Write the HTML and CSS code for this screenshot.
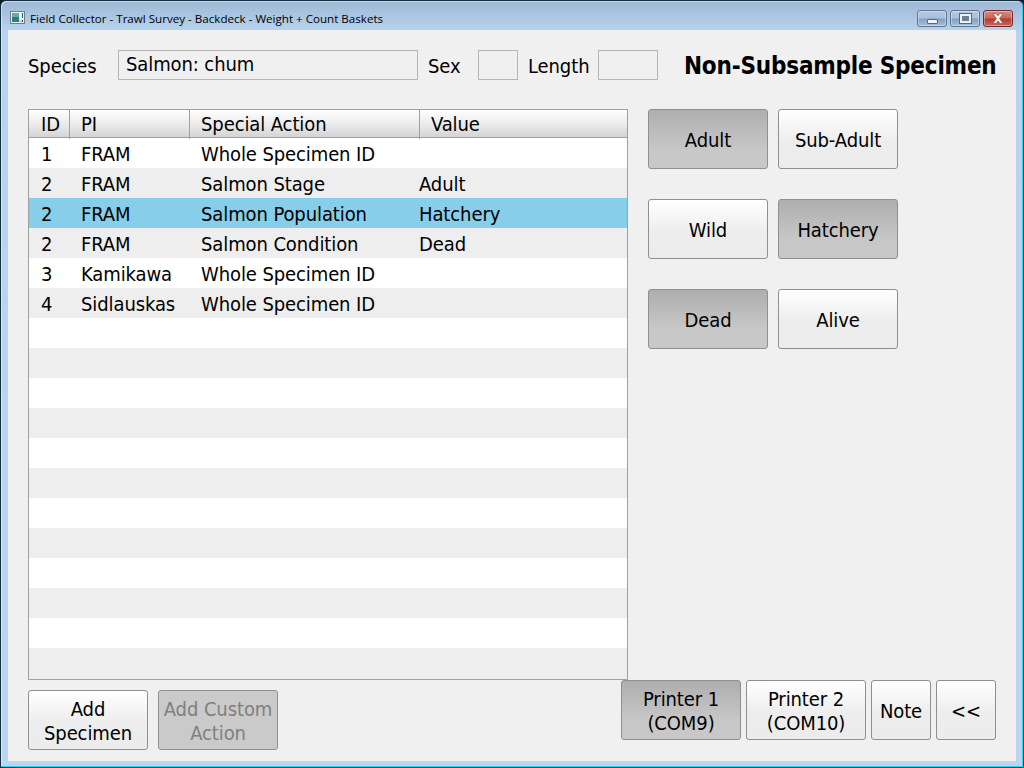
FILE: index.html
```html
<!DOCTYPE html>
<html lang="en">
<head>
<meta charset="utf-8">
<title>Field Collector</title>
<link rel="stylesheet" href="styles.css">
</head>
<body>
<div class="window">
  <div class="titlebar">
    <svg class="app-icon" width="16" height="16" viewBox="0 0 16 16">
      <rect x="0.5" y="1.5" width="14" height="12" fill="#e8eef2" stroke="#6d7f8c"/>
      <rect x="2" y="3" width="7" height="9" fill="#2f7f78"/>
      <rect x="2" y="3" width="7" height="4" fill="#6fa7a6"/>
      <rect x="9" y="10" width="3" height="2" fill="#c5ced4"/>
      <rect x="12" y="3" width="1" height="5" fill="#2f5a70"/>
      <rect x="12" y="10" width="1" height="2" fill="#2f5a70"/>
    </svg>
    <span class="title-text">Field Collector - Trawl Survey - Backdeck - Weight + Count Baskets</span>
    <div class="controls">
      <div class="ctl ctl-min"><span class="glyph-min"></span></div>
      <div class="ctl ctl-max"><span class="glyph-max"></span></div>
      <div class="ctl ctl-close">
        <svg width="14" height="11" viewBox="0 0 14 11"><path d="M2 0.5h3l2 2.3 2-2.3h3l-3.4 5 3.4 5h-3l-2-2.5-2 2.5h-3l3.4-5z" fill="#f4f1f0" stroke="#8a4a48" stroke-width="0.6"/></svg>
      </div>
    </div>
  </div>
  <div class="client">
    <div class="top-row">
      <span class="label label-species">Species</span>
      <div class="field field-species">Salmon: chum</div>
      <span class="label label-sex">Sex</span>
      <div class="field field-sex"></div>
      <span class="label label-length">Length</span>
      <div class="field field-length"></div>
      <h1 class="heading">Non-Subsample Specimen</h1>
    </div>
    <div class="middle">
      <div class="table">
        <div class="thead">
          <div class="th th-id">ID</div>
          <div class="th th-pi">PI</div>
          <div class="th th-action">Special Action</div>
          <div class="th th-value">Value</div>
        </div>
        <div class="tbody">
          <div class="row"><span>1</span><span>FRAM</span><span>Whole Specimen ID</span><span></span></div>
          <div class="row alt"><span>2</span><span>FRAM</span><span>Salmon Stage</span><span>Adult</span></div>
          <div class="row selected"><span>2</span><span>FRAM</span><span>Salmon Population</span><span>Hatchery</span></div>
          <div class="row alt"><span>2</span><span>FRAM</span><span>Salmon Condition</span><span>Dead</span></div>
          <div class="row"><span>3</span><span>Kamikawa</span><span>Whole Specimen ID</span><span></span></div>
          <div class="row alt"><span>4</span><span>Sidlauskas</span><span>Whole Specimen ID</span><span></span></div>
          <div class="row"></div><div class="row alt"></div>
          <div class="row"></div><div class="row alt"></div>
          <div class="row"></div><div class="row alt"></div>
          <div class="row"></div><div class="row alt"></div>
          <div class="row"></div><div class="row alt"></div>
          <div class="row"></div><div class="row alt"></div>
        </div>
      </div>
      <div class="toggles">
        <div class="btn on">Adult</div>
        <div class="btn">Sub-Adult</div>
        <div class="btn">Wild</div>
        <div class="btn on">Hatchery</div>
        <div class="btn on">Dead</div>
        <div class="btn">Alive</div>
      </div>
    </div>
    <div class="bottom">
      <div class="bottom-left">
        <div class="btn">Add<br>Specimen</div>
        <div class="btn disabled">Add Custom<br>Action</div>
      </div>
      <div class="bottom-right">
        <div class="btn on">Printer 1<br>(COM9)</div>
        <div class="btn">Printer 2<br>(COM10)</div>
        <div class="btn btn-small">Note</div>
        <div class="btn btn-small">&lt;&lt;</div>
      </div>
    </div>
  </div>
</div>
</body>
</html>
```

FILE: styles.css
```css
html, body {
  margin: 0;
  padding: 0;
  background: #0b1a24;
}
.window {
  box-sizing: border-box;
  width: 1024px;
  height: 768px;
  padding: 0 7px 6px;
  border: 1px solid #12303f;
  border-radius: 6px 6px 0 0;
  background: linear-gradient(#9db8d6 0, #b9d3ed 30px, #bcd6ef 100%);
  box-shadow: inset -1px -1px 0 #35d0e8, inset 1px 1px 0 rgba(255,255,255,.45);
  display: flex;
  flex-direction: column;
  overflow: hidden;
}
.titlebar {
  height: 29px;
  flex: none;
  display: flex;
  align-items: center;
  margin-left: 2px;
  font-family: "Open Sans", sans-serif;
  font-size: 11.6px;
  color: #000;
}
.app-icon { flex: none; margin-right: 4px; margin-top: 5px; }
.title-text { margin-top: 6px; white-space: nowrap; flex: 1; }
.controls {
  display: flex;
  gap: 3px;
  margin-right: 3px;
  align-self: flex-start;
  margin-top: 9px;
}
.ctl {
  box-sizing: border-box;
  height: 17px;
  width: 30px;
  border: 1px solid #5e7590;
  border-radius: 3px;
  display: flex;
  align-items: center;
  justify-content: center;
  box-shadow: inset 0 0 0 1px rgba(255,255,255,.35);
}
.ctl-min, .ctl-max {
  background: linear-gradient(#b4c9e0 0, #a9c0da 48%, #84a0c0 52%, #a7c0da 100%);
}
.ctl-close {
  border-color: #6b2a2c;
  background: linear-gradient(#d98a7e 0, #c9655a 48%, #b33a30 52%, #c9675c 100%);
}
.glyph-min {
  width: 11px;
  height: 5px;
  margin-top: 5px;
  background: #f2f4f7;
  border: 1px solid #55687e;
  border-radius: 1px;
  box-sizing: border-box;
}
.glyph-max {
  box-sizing: border-box;
  width: 11px;
  height: 9px;
  border: 2px solid #eef2f6;
  background: #6c7f96;
  outline: 1px solid #55687e;
}
.client {
  flex: 1;
  background: #f0f0f0;
  padding: 20px 20px 0 20px;
  font-family: "DejaVu Sans Condensed", "DejaVu Sans", sans-serif;
  font-size: 20px;
  letter-spacing: -0.1px;
  color: #000;
  display: flex;
  flex-direction: column;
}
.top-row {
  height: 30px;
  display: flex;
  align-items: center;
  flex: none;
}
.label { white-space: nowrap; flex: none; padding-top: 2px; }
.label-species { width: 90px; }
.label-sex { width: 50px; margin-left: 10px; }
.label-length { width: 70px; margin-left: 10px; }
.field {
  box-sizing: border-box;
  flex: none;
  height: 30px;
  border: 1px solid #b4b4b4;
  background: #f0f0f0;
  line-height: 27px;
  padding-left: 7px;
}
.field-species { width: 300px; }
.field-sex { width: 40px; }
.field-length { width: 60px; }
.heading {
  margin: 0 0 0 26px;
  padding-top: 2px;
  font-size: 24px;
  letter-spacing: -0.2px;
  font-weight: bold;
  white-space: nowrap;
  flex: none;
}
.middle {
  display: flex;
  flex: none;
  gap: 20px;
  margin-top: 29px;
}
.table {
  box-sizing: border-box;
  width: 600px;
  height: 571px;
  border: 1px solid #a0a0a0;
  background: #f0f0f0;
  overflow: hidden;
}
.thead {
  display: grid;
  grid-template-columns: 41px 120px 230px 1fr;
  height: 28px;
  border-bottom: 1px solid #a0a0a0;
  box-sizing: border-box;
  background: linear-gradient(#ffffff, #e8e8e8 60%, #d4d4d4);
}
.th {
  box-sizing: border-box;
  line-height: 29px;
  padding-left: 11px;
  border-right: 1px solid #a0a0a0;
}
.th-id { padding-left: 12px; }
.th-value { border-right: 0; }
.row {
  height: 30px;
  line-height: 32px;
  background: #fff;
  display: grid;
  grid-template-columns: 41px 120px 229px 1fr;
  white-space: nowrap;
}
.row.alt { background: #eeeeee; }
.row.selected { background: #87ceeb; }
.row span { padding-left: 12px; }
.row span:nth-child(2), .row span:nth-child(3) { padding-left: 11px; }
.row span:last-child { padding-left: 0; }
.toggles {
  display: grid;
  grid-template-columns: 120px 120px;
  grid-auto-rows: 60px;
  column-gap: 10px;
  row-gap: 30px;
}
.btn {
  box-sizing: border-box;
  height: 60px;
  width: 120px;
  padding-top: 2px;
  border: 1px solid #8f8f8f;
  border-radius: 3px;
  background: linear-gradient(#ffffff, #ededed 55%, #ececec);
  display: flex;
  align-items: center;
  justify-content: center;
  text-align: center;
  line-height: 24px;
}
.btn.on { background: linear-gradient(#aeaeae, #c8c8c8 70%, #c8c8c8); }
.btn.disabled {
  background: #cacaca;
  color: #808080;
}
.btn-small { width: 60px; }
.bottom {
  display: flex;
  justify-content: space-between;
  align-items: flex-start;
  flex: none;
}
.bottom-left {
  display: flex;
  gap: 10px;
  margin-top: 10px;
}
.bottom-right {
  display: flex;
  gap: 5px;
}
```
